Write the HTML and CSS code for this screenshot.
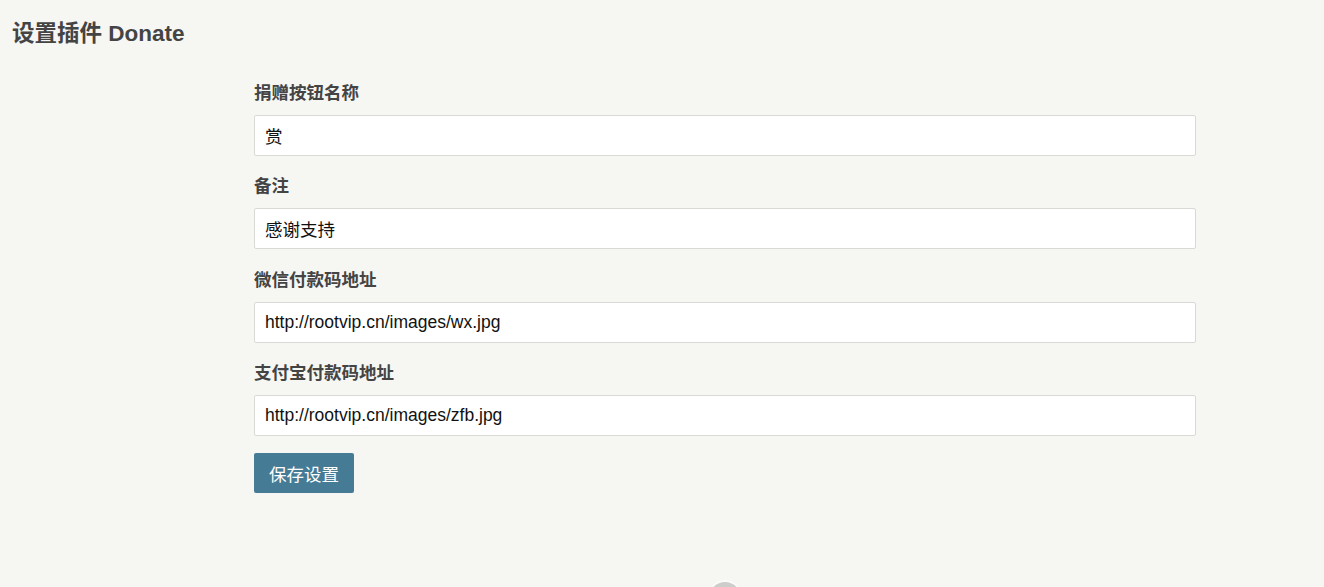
FILE: index.html
```html
<!DOCTYPE html>
<html lang="zh-CN">
<head>
<meta charset="utf-8">
<title>设置插件 Donate</title>
<link rel="stylesheet" href="styles.css">
</head>
<body>
<div class="page">
  <h2 class="page-title">设置插件 Donate</h2>
  <div class="main">
    <div class="spacer"></div>
    <form class="options">
      <div class="field">
        <label class="label" for="f1">捐赠按钮名称</label>
        <input class="text" id="f1" type="text" value="赏">
      </div>
      <div class="field">
        <label class="label" for="f2">备注</label>
        <input class="text" id="f2" type="text" value="感谢支持">
      </div>
      <div class="field">
        <label class="label" for="f3">微信付款码地址</label>
        <input class="text" id="f3" type="text" value="http://rootvip.cn/images/wx.jpg">
      </div>
      <div class="field">
        <label class="label" for="f4">支付宝付款码地址</label>
        <input class="text" id="f4" type="text" value="http://rootvip.cn/images/zfb.jpg">
      </div>
      <div class="submit">
        <button class="btn" type="button">保存设置</button>
      </div>
      <div class="foot">
        <svg class="logo" width="34" height="34" viewBox="0 0 34 34"><circle cx="17" cy="17" r="17" fill="#fbfbf9"/><circle cx="17" cy="17.5" r="15.5" fill="#cdcdcb"/></svg>
      </div>
    </form>
  </div>
</div>
</body>
</html>
```
FILE: styles.css
```css
html, body {
  margin: 0;
  padding: 0;
  background: #F6F6F3;
}
body {
  font-family: "Liberation Sans", "Noto Sans CJK SC", sans-serif;
  font-size: 17.5px;
  color: #444;
  overflow: hidden;
}
.page {
  padding: 0 12px;
}
.page-title {
  margin: 17px 0 11px;
  font-size: 22.5px;
  line-height: 34px;
  font-weight: bold;
  color: #444;
}
.main {
  display: grid;
  grid-template-columns: 242px 942px;
}
.options {
  display: flex;
  flex-direction: column;
  gap: 17.3px;
  padding-top: 18px;
}
.field {
  display: flex;
  flex-direction: column;
}
.label {
  font-weight: bold;
  line-height: 26px;
  margin-bottom: 9px;
  color: #444;
}
.text {
  box-sizing: border-box;
  height: 41px;
  width: 100%;
  margin: 0;
  padding: 0 10px;
  border: 1px solid #D9D9D6;
  border-radius: 2px;
  background: #fff;
  font-family: "Liberation Sans", "Noto Sans CJK SC", sans-serif;
  font-size: 17.5px;
  color: #111;
}
.submit {
  display: flex;
}
.btn {
  height: 40px;
  padding: 0 15px;
  border: none;
  border-radius: 2px;
  background: #467B96;
  color: #fff;
  font-family: "Liberation Sans", "Noto Sans CJK SC", sans-serif;
  font-size: 17.5px;
  cursor: pointer;
}
.foot {
  display: flex;
  justify-content: center;
  margin-top: 70px;
}
.logo {
  display: block;
}
```
